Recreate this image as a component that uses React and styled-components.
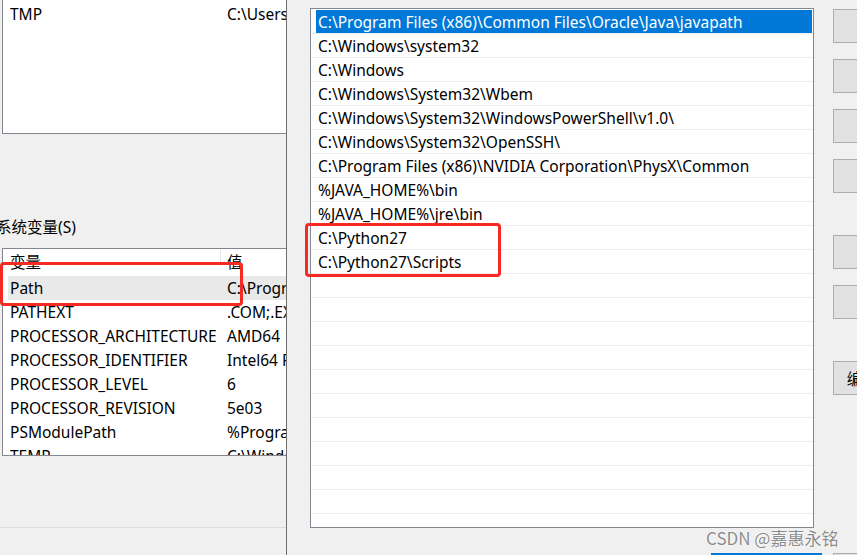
import React from "react";
import styled, { createGlobalStyle } from "styled-components";

const GlobalStyle = createGlobalStyle`
  html, body {
    margin: 0;
    padding: 0;
    background: #f0f0f0;
    overflow: hidden;
  }
  body {
    font-family: "Noto Sans", "Noto Sans CJK SC", sans-serif;
    font-size: 15.5px;
    color: #000;
  }
`;

const Screen = styled.div`
  position: relative;
  display: flex;
  width: 857px;
  height: 555px;
  overflow: hidden;
  background: #f0f0f0;
`;

/* ---- window behind ---- */

const BackWindow = styled.div`
  width: 286px;
  flex: none;
  display: flex;
  flex-direction: column;
  overflow: hidden;
`;

const ListFrame = styled.div`
  width: 330px;
  margin-left: 2px;
  background: #fff;
  border: 1px solid #828790;
  border-top: ${(p) => (p.open ? "none" : "1px solid #828790")};
  height: ${(p) => p.h}px;
  box-sizing: border-box;
  overflow: hidden;
  flex: none;
`;

const TopFrame = styled(ListFrame)`
  padding-top: 2px;
`;

const SectionLabel = styled.div`
  height: 20px;
  line-height: 20px;
  margin: 83px 0 11px -4px;
  white-space: nowrap;
  flex: none;
`;

const VarHeader = styled.div`
  display: grid;
  grid-template-columns: 217px 1fr;
  height: 27px;
  line-height: 27px;
  padding-left: 7px;
  position: relative;
`;

const HeaderSplit = styled.span`
  position: absolute;
  left: 217px;
  top: 1px;
  width: 1px;
  height: 16px;
  background: #e5e5e5;
`;

const VarRow = styled.div`
  display: grid;
  grid-template-columns: 217px 1fr;
  height: 24px;
  line-height: 24px;
  margin-left: 5px;
  padding-left: 2px;
  white-space: nowrap;
  background: ${(p) => (p.selected ? "#e9e9e9" : "transparent")};
`;

const Cell = styled.span`
  overflow: hidden;
`;

const BackDivider = styled.div`
  margin-top: auto;
  margin-bottom: 27px;
  height: 1px;
  background: #dcdcdc;
  flex: none;
`;

/* ---- front dialog ---- */

const Dialog = styled.div`
  flex: 1;
  border-left: 1px solid #6d6d6d;
  padding: 8px 0 0 23px;
  display: flex;
  flex-direction: column;
  overflow: hidden;
`;

const DialogBody = styled.div`
  display: flex;
  gap: 19px;
  width: 643px;
  flex: none;
`;

const PathList = styled.div`
  width: 504px;
  height: 520px;
  flex: none;
  box-sizing: border-box;
  background: #fff;
  border: 1px solid #828790;
  padding: 1px 0 0 0;
  overflow: hidden;
`;

const PathRow = styled.div`
  height: 23px;
  line-height: 25px;
  border-bottom: 1px solid #ececec;
  padding: 0 1px 0 5px;
  background-clip: content-box;
  background-color: ${(p) => (p.selected ? "#0078d7" : "transparent")};
  color: ${(p) => (p.selected ? "#fff" : "#000")};
  white-space: nowrap;
  overflow: hidden;
`;

const PathText = styled.span`
  padding-left: 2px;
`;

const ButtonColumn = styled.div`
  display: flex;
  flex-direction: column;
  gap: 16px;
  padding-top: 1px;
  width: 120px;
  flex: none;
`;

const SideButton = styled.button`
  width: 120px;
  height: 34px;
  flex: none;
  margin-top: ${(p) => (p.spaced ? "26px" : "0")};
  background: #e1e1e1;
  border: 1px solid #adadad;
  font: inherit;
  color: #000;
  text-align: center;
  padding: 0;
  white-space: nowrap;
  overflow: hidden;
`;

const Footer = styled.div`
  display: flex;
  justify-content: flex-end;
  gap: 11px;
  width: 643px;
  margin-top: 25px;
  flex: none;
`;

const FooterButton = styled.button`
  width: ${(p) => p.w}px;
  height: 30px;
  flex: none;
  background: #e1e1e1;
  border: ${(p) => (p.primary ? "2px solid #0078d7" : "1px solid #adadad")};
  font: inherit;
  padding: 0;
`;

/* ---- annotations ---- */

const Marker = styled.div`
  position: absolute;
  border: 3px solid #f52a22;
  border-radius: 4px;
  box-sizing: border-box;
  pointer-events: none;
`;

const Watermark = styled.div`
  position: absolute;
  left: 706px;
  top: 525px;
  font-family: "Noto Sans CJK SC", "Noto Sans", sans-serif;
  font-size: 17px;
  color: rgba(120, 120, 120, 0.85);
  text-shadow: 0 0 2px #fff;
  white-space: nowrap;
`;

const sysVars = [
  ["Path", "C:\\Program Files", true],
  ["PATHEXT", ".COM;.EXE;.BAT"],
  ["PROCESSOR_ARCHITECTURE", "AMD64"],
  ["PROCESSOR_IDENTIFIER", "Intel64 Family 6"],
  ["PROCESSOR_LEVEL", "6"],
  ["PROCESSOR_REVISION", "5e03"],
  ["PSModulePath", "%ProgramFiles%"],
  ["TEMP", "C:\\Windows\\TEMP"],
];

const paths = [
  "C:\\Program Files (x86)\\Common Files\\Oracle\\Java\\javapath",
  "C:\\Windows\\system32",
  "C:\\Windows",
  "C:\\Windows\\System32\\Wbem",
  "C:\\Windows\\System32\\WindowsPowerShell\\v1.0\\",
  "C:\\Windows\\System32\\OpenSSH\\",
  "C:\\Program Files (x86)\\NVIDIA Corporation\\PhysX\\Common",
  "%JAVA_HOME%\\bin",
  "%JAVA_HOME%\\jre\\bin",
  "C:\\Python27",
  "C:\\Python27\\Scripts",
];

const rows = [...paths, ...Array(12).fill("")];

export default function App() {
  return (
    <Screen>
      <GlobalStyle />
      <BackWindow>
        <TopFrame open h={134}>
          <VarRow>
            <Cell>TMP</Cell>
            <Cell>C:\Users\Admin\AppData</Cell>
          </VarRow>
        </TopFrame>
        <SectionLabel>系统变量(S)</SectionLabel>
        <ListFrame h={208}>
          <VarHeader>
            <Cell>变量</Cell>
            <Cell>值</Cell>
            <HeaderSplit />
          </VarHeader>
          {sysVars.map(([name, value, sel]) => (
            <VarRow key={name} selected={sel}>
              <Cell>{name}</Cell>
              <Cell>{value}</Cell>
            </VarRow>
          ))}
        </ListFrame>
        <BackDivider />
      </BackWindow>

      <Dialog>
        <DialogBody>
          <PathList>
            {rows.map((p, i) => (
              <PathRow key={i} selected={i === 0}>
                <PathText>{p}</PathText>
              </PathRow>
            ))}
          </PathList>
          <ButtonColumn>
            <SideButton>新建(N)</SideButton>
            <SideButton>编辑(E)</SideButton>
            <SideButton>浏览(B)...</SideButton>
            <SideButton>删除(D)</SideButton>
            <SideButton spaced>上移(U)</SideButton>
            <SideButton>下移(O)</SideButton>
            <SideButton spaced>编辑文本(T)...</SideButton>
          </ButtonColumn>
        </DialogBody>
        <Footer>
          <FooterButton primary w={111}>确定</FooterButton>
          <FooterButton w={120}>取消</FooterButton>
        </Footer>
      </Dialog>

      <Marker style={{ left: 0, top: 262, width: 243, height: 44 }} />
      <Marker style={{ left: 305, top: 223, width: 196, height: 54 }} />
      <Watermark>CSDN @嘉惠永铭</Watermark>
    </Screen>
  );
}
